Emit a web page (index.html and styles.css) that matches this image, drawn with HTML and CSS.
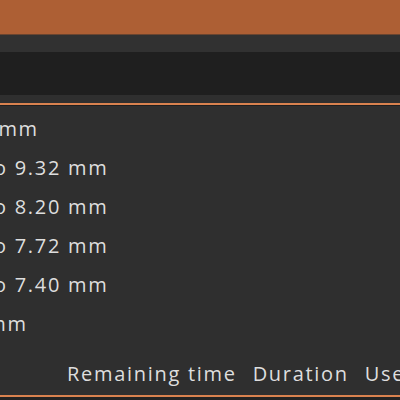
FILE: index.html
```html
<!DOCTYPE html>
<html>
<head>
<meta charset="utf-8">
<link rel="stylesheet" href="styles.css">
</head>
<body>
<div class="app">
  <div class="titlebar"></div>
  <div class="toolbar"></div>
  <div class="field"></div>
  <div class="subbar"></div>
  <div class="panel">
    <div class="legend">
      <div class="row">10.44 mm</div>
      <div class="row">9.76 to 9.32 mm</div>
      <div class="row">9.32 to 8.20 mm</div>
      <div class="row">8.20 to 7.72 mm</div>
      <div class="row">7.72 to 7.40 mm</div>
      <div class="row row-last">7.40 mm</div>
    </div>
    <div class="columns">
      <span>Remaining time</span>
      <span>Duration</span>
      <span>Used filament</span>
    </div>
  </div>
  <div class="bottom"></div>
</div>
</body>
</html>
```
FILE: styles.css
```css
* { box-sizing: border-box; }
html, body {
  margin: 0;
  padding: 0;
  width: 400px;
  height: 400px;
  overflow: hidden;
  background: #2f2f2f;
  font-family: "Open Sans", "Noto Sans", sans-serif;
}
.app {
  display: flex;
  flex-direction: column;
  height: 400px;
}
.titlebar {
  height: 35px;
  background: #ad5f34;
  border-bottom: 1px solid #6a4530;
}
.toolbar {
  height: 17px;
  background: #313131;
}
.field {
  height: 43px;
  background: #1f1f1f;
}
.subbar {
  height: 8px;
  background: #2f2f2f;
}
.panel {
  flex: 1;
  display: flex;
  flex-direction: column;
  border-top: 2px solid #d9824f;
  box-shadow: inset 0 1px 0 #1f1f1f;
  background: #2f2f2f;
  color: #dedede;
  font-size: 20px;
  letter-spacing: 1.7px;
  overflow: hidden;
}
.legend {
  margin-left: -68px;
  padding-top: 4px;
  white-space: nowrap;
}
.row {
  height: 39px;
  line-height: 39px;
}
.row-last {
  margin-left: 2px;
}
.columns {
  display: flex;
  gap: 16px;
  padding-left: 67px;
  margin-top: 16px;
  line-height: 30px;
  white-space: nowrap;
}
.bottom {
  height: 5px;
  border-top: 2px solid #d9824f;
  background: #232323;
}
```
